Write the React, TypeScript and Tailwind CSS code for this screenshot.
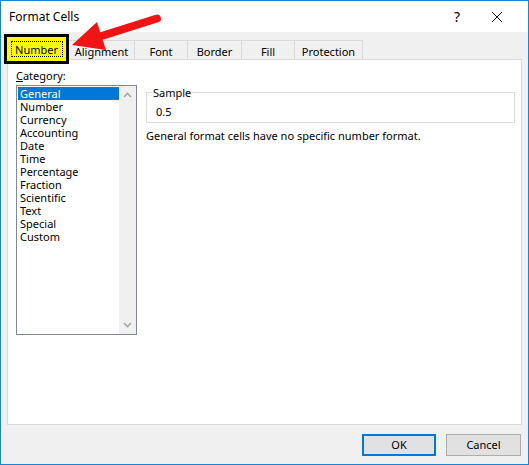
const categories = [
  "General",
  "Number",
  "Currency",
  "Accounting",
  "Date",
  "Time",
  "Percentage",
  "Fraction",
  "Scientific",
  "Text",
  "Special",
  "Custom",
];

const tabs = [
  { label: "Alignment", w: "w-[66px]" },
  { label: "Font", w: "w-[53px]" },
  { label: "Border", w: "w-[54px]" },
  { label: "Fill", w: "w-[53px]" },
  { label: "Protection", w: "w-[68px]" },
];

function Chevron({ up }: { up?: boolean }) {
  return (
    <svg width="9" height="6" viewBox="0 0 9 6">
      <path
        d={up ? "M1 5 L4.5 1.5 L8 5" : "M1 1 L4.5 4.5 L8 1"}
        fill="none"
        stroke="#a6a6a6"
        strokeWidth="1.6"
      />
    </svg>
  );
}

export default function App() {
  return (
    <div
      className="relative w-[529px] h-[465px] border border-[#1883d7] bg-[#f0f0f0] flex flex-col text-[11px] text-black"
      style={{ fontFamily: '"Noto Sans", "Open Sans", sans-serif' }}
    >
      {/* title bar */}
      <div className="h-[31px] bg-white flex items-center pl-[8px] shrink-0 text-[12px]">
        <span className="flex-1">Format Cells</span>
        <span className="w-[12px] text-[14px] mr-[28px] text-center">?</span>
        <svg width="12" height="12" viewBox="0 0 12 12" className="mr-[25px]">
          <path d="M1 1 L11 11 M11 1 L1 11" stroke="#111" strokeWidth="1" />
        </svg>
      </div>

      <div className="flex flex-col px-[6px] pt-[8px]">
        {/* tabs */}
        <div className="flex h-[20px]">
          <div className="w-[62px] bg-white border border-b-0 border-[#d9d9d9] flex items-center justify-center">
            Number
          </div>
          {tabs.map((t) => (
            <div
              key={t.label}
              className={`${t.w} border-t border-r border-[#d9d9d9] flex items-center justify-center leading-none pt-[1px]`}
            >
              {t.label}
            </div>
          ))}
        </div>

        {/* panel */}
        <div className="-mt-px h-[366px] bg-white border border-[#d9d9d9] flex">
          <div className="pl-[8px] pt-[8px] flex flex-col">
            <div className="leading-[15px]">
              <span className="underline">C</span>ategory:
            </div>
            <div className="mt-[2px] w-[121px] h-[250px] border border-[#828790] flex">
              <div className="w-[102px] pt-[1px] pl-[1px] leading-[13px]">
                {categories.map((c, i) => (
                  <div
                    key={c}
                    className={`h-[13px] pl-[2px] ${i === 0 ? "bg-[#0078d7] text-white" : ""}`}
                  >
                    {c}
                  </div>
                ))}
              </div>
              <div className="w-[17px] bg-[#f0f0f0] flex flex-col items-center justify-between py-[6px]">
                <Chevron up />
                <Chevron />
              </div>
            </div>
          </div>

          <div className="flex-1 pl-[9px] pr-[6px] flex flex-col">
            <div className="relative mt-[32px] h-[31px] border border-[#dcdcdc]">
              <span className="absolute -top-[8px] left-[5px] px-[1px] bg-white leading-[15px]">
                Sample
              </span>
              <div className="pl-[9px] pt-[11px] leading-[15px]">0.5</div>
            </div>
            <div className="mt-[5px] leading-[15px]">
              General format cells have no specific number format.
            </div>
          </div>
        </div>

        {/* buttons */}
        <div className="mt-[9px] flex justify-end gap-[10px] pr-px">
          <button className="w-[74px] h-[22px] bg-[#e1e1e1] border-2 border-[#0078d7] flex items-center justify-center">
            OK
          </button>
          <button className="w-[75px] h-[22px] bg-[#e1e1e1] border border-[#adadad] flex items-center justify-center">
            Cancel
          </button>
        </div>
      </div>

      {/* annotation: yellow highlight box */}
      <div className="absolute left-[3px] top-[33px] w-[65px] h-[30px] border-[3px] border-black bg-[#ffff00] flex items-center justify-center">
        <div className="w-[52px] h-[16px] border border-dotted border-black flex items-center justify-center leading-none">
          Number
        </div>
      </div>

      {/* annotation: red arrow */}
      <svg
        className="absolute left-0 top-0 pointer-events-none"
        width="200"
        height="70"
        viewBox="0 0 200 70"
      >
        <line
          x1="99"
          y1="35.5"
          x2="156"
          y2="17.5"
          stroke="#f01414"
          strokeWidth="8"
          strokeLinecap="round"
        />
        <polygon points="71,44 96,21 105,49" fill="#f01414" />
      </svg>
    </div>
  );
}
